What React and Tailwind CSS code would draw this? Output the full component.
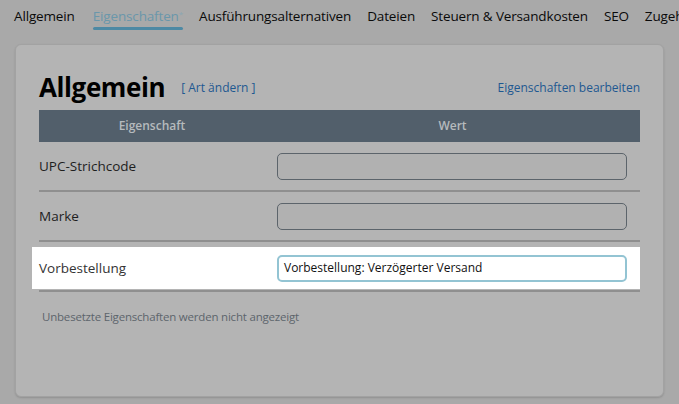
import React from 'react';

const tabs = [
  { label: 'Allgemein' },
  { label: 'Eigenschaften', active: true },
  { label: 'Ausführungsalternativen' },
  { label: 'Dateien' },
  { label: 'Steuern & Versandkosten' },
  { label: 'SEO' },
  { label: 'Zugehörige Artikel' },
];

const rows = [
  { name: 'UPC-Strichcode', value: '' },
  { name: 'Marke', value: '' },
];

const App = () => {
  return (
    <div
      className="w-[679px] h-[404px] overflow-hidden bg-[#a9a9a9] text-[#111]"
      style={{ fontFamily: '"Open Sans", "Noto Sans", sans-serif' }}
    >
      {/* tabs */}
      <div className="flex items-start gap-[16px] pl-[14px] pt-[6px] h-[44px] whitespace-nowrap">
        {tabs.map((t) => (
          <div key={t.label} className={`flex flex-col ${t.active ? 'ml-[2px]' : ''}`}>
            <span
              className={`text-[13.5px] leading-[20px] tracking-[-0.15px] ${
                t.active ? 'text-[#6a97ab]' : 'text-[#0a0a0a]'
              }`}
            >
              {t.label}
              {t.active && <sup className="text-[8px] text-[#8aa7b4]">*</sup>}
            </span>
            {t.active && <div className="h-[3px] bg-[#4d89a4] rounded mt-[1px]" />}
          </div>
        ))}
      </div>

      {/* panel */}
      <div className="mx-[15px] h-[353px] rounded-[6px] bg-[#b4b4b4] border border-[#a2a2a2] shadow-[0_1px_2px_rgba(0,0,0,0.15)] px-[23px] pt-[19px]">
        <div className="flex items-end justify-between h-[38px]">
          <div className="flex items-end gap-[16px]">
            <h1 className="text-[26px] leading-[30px] font-bold text-black tracking-[-0.4px]">Allgemein</h1>
            <span className="text-[12px] text-[#1e5891] mb-[5px]">[ Art ändern ]</span>
          </div>
          <span className="text-[12px] text-[#1e5891] mb-[5px]">Eigenschaften bearbeiten</span>
        </div>

        <div className="mt-[8px] flex h-[32px] items-center bg-[#525f6b] text-[12px] font-semibold text-[#b6babd]">
          <div className="w-[226px] text-center">Eigenschaft</div>
          <div className="flex-1 text-center">Wert</div>
        </div>

        {rows.map((r) => (
          <div key={r.name} className="flex items-center h-[50px] border-b-2 border-[#8f8f8f]">
            <div className="w-[238px] text-[13.5px] text-[#1e1e1e]">{r.name}</div>
            <div className="w-[350px] h-[27px] rounded-[5px] border border-[#5c646b] bg-[#b1b1b1]" />
          </div>
        ))}

        <div className="-ml-[7px] mt-[5px] flex items-center h-[42px] bg-white pl-[7px]">
          <div className="w-[238px] text-[13.5px] text-[#333]">Vorbestellung</div>
          <div className="w-[350px] h-[27px] rounded-[5px] border-2 border-[#93c4d3] bg-white flex items-center px-[5px] text-[12px] text-[#111]">
            Vorbestellung: Verzögerter Versand
          </div>
        </div>
        <div className="h-[2px] bg-[#8f8f8f] mt-[1px]" />

        <p className="mt-[16px] pl-[3px] text-[11.5px] text-[#5d656c] tracking-[-0.2px]">
          Unbesetzte Eigenschaften werden nicht angezeigt
        </p>
      </div>
    </div>
  );
};

export default App;
